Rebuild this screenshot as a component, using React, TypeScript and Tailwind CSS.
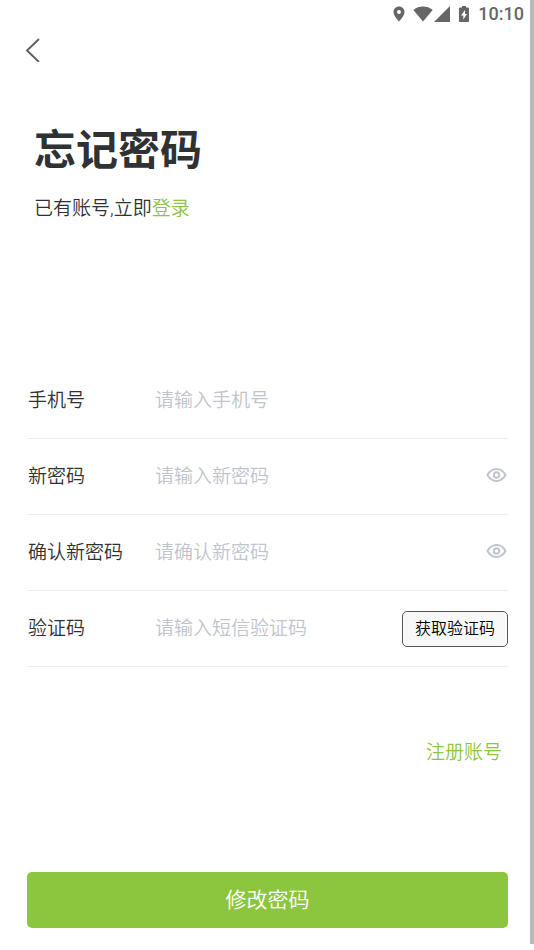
import { useState } from "react"

type FieldProps = {
  id: string
  label: string
  placeholder: string
  type?: "text" | "tel" | "password"
  children?: React.ReactNode
}

const StatusBar = () => {
  return (
    <div className="flex h-7 items-center justify-end pr-1.5 text-[#666]">
      <svg className="mr-2 h-4 w-3" viewBox="0 0 12 16" fill="currentColor">
        <path fillRule="evenodd" d="M6 0.5C2.9 0.5 0.5 2.9 0.5 6C0.5 10 6 15.5 6 15.5S11.500 10 11.500 6C11.500 2.900 9.100 0.500 6 0.500ZM6 8A2 2 0 1 1 6 4A2 2 0 0 1 6 8Z" />
      </svg>
      <svg className="mr-px h-4 w-5" viewBox="0 0 20 16" fill="currentColor">
        <path d="M0.300 4C5.800-0.600 14.200-0.600 19.700 4L10 15.500Z" />
      </svg>
      <svg className="mr-2 h-4 w-4" viewBox="0 0 16 16" fill="currentColor">
        <path d="M16 0V16H0Z" />
      </svg>
      <svg className="mr-2 h-4 w-3" viewBox="0 0 12 16" fill="currentColor">
        <path fillRule="evenodd" d="M4 0H8V1.500H10.200Q11 1.500 11 2.300V15.200Q11 16 10.200 16H1.800Q1 16 1 15.200V2.300Q1 1.500 1.800 1.500H4ZM7 4L3 9.500H5.300V13.500L9 8H7Z" />
      </svg>
      <span className="text-lg leading-7 font-medium">10:10</span>
    </div>
  )
}

const Field = ({ id, label, placeholder, type = "text", children }: FieldProps) => {
  return (
    <div className="flex h-[76px] items-center border-b border-[#eee]">
      <label htmlFor={id} className="w-32 shrink-0 pl-px">{label}</label>
      <input
        id={id}
        type={type}
        placeholder={placeholder}
        className="h-10 min-w-0 flex-1 bg-transparent outline-none placeholder:text-[#c0c4cc]"
      />
      {children}
    </div>
  )
}

const PasswordField = (props: FieldProps) => {
  const [show, setShow] = useState<boolean>(false)

  return (
    <Field {...props} type={show ? "text" : "password"}>
      <button type="button" aria-label="显示密码" className="pb-1 text-[#c0c4cc]" onClick={() => setShow(!show)}>
        <svg className="h-5 w-[22px]" viewBox="0 0 22 20" fill="none" stroke="currentColor" strokeWidth="2">
          <path d="M1.500 10C6 2 15 2 19.500 10C15 18 6 18 1.500 10Z" strokeLinejoin="round" />
          <circle cx="10.500" cy="10" r="2.700" />
        </svg>
      </button>
    </Field>
  )
}

const App = () => {
  return (
    <main className="border-r-4 border-[#b8b8b8] bg-white pb-4 font-['Roboto','Noto_Sans_CJK_SC',sans-serif] text-[19px] leading-7 font-[350] text-[#303133]">
      <StatusBar />
      <header className="flex h-11 items-center px-6">
        <button type="button" aria-label="返回">
          <svg className="h-6 w-4" viewBox="0 0 16 24" fill="none" stroke="#606266" strokeWidth="2">
            <path d="M15 1L3 12.500L15 24" />
          </svg>
        </button>
      </header>

      <section className="px-[34px] pt-[49px]">
        <h1 className="text-[42px] leading-[60px] font-bold">忘记密码</h1>
        <p className="mt-3.5">
          已有账号,立即<a href="#login" className="text-[#8cc63f]">登录</a>
        </p>
      </section>

      <form className="pt-[140px] pr-[22px] pl-[27px]" onSubmit={(e) => e.preventDefault()}>
        <Field id="phone" label="手机号" placeholder="请输入手机号" type="tel" />
        <PasswordField id="password" label="新密码" placeholder="请输入新密码" />
        <PasswordField id="confirm" label="确认新密码" placeholder="请确认新密码" />
        <Field id="code" label="验证码" placeholder="请输入短信验证码">
          <button type="button" className="h-9 rounded-[5px] border border-[#555] bg-[#f8f8f8] px-3 text-base text-black">
            获取验证码
          </button>
        </Field>

        {/* register */}
        <div className="mt-[72px] flex justify-end pr-1.5">
          <a href="#register" className="text-[#8cc63f]">注册账号</a>
        </div>

        <button type="submit" className="mt-[105px] h-14 w-full rounded-[5px] bg-[#8cc63f] text-[21px] text-white">
          修改密码
        </button>
      </form>
    </main>
  )
}

export default App
